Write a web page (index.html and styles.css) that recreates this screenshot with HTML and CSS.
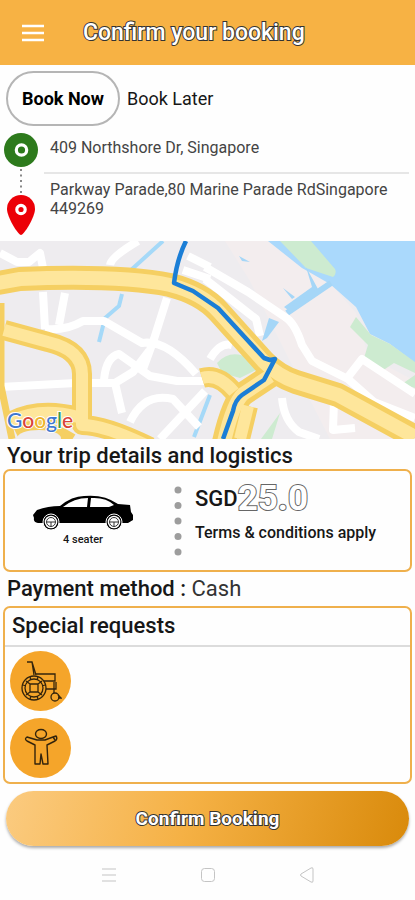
FILE: index.html
```html
<!DOCTYPE html>
<html lang="en">
<head>
<meta charset="utf-8">
<meta name="viewport" content="width=device-width, initial-scale=1">
<title>Confirm your booking</title>
<link rel="stylesheet" href="styles.css">
</head>
<body>
<header class="topbar">
  <button class="menu" type="button" aria-label="Menu">
    <svg width="24" height="18" viewBox="0 0 24 18"><path d="M1 2H23M1 9H23M1 16H23" stroke="#fff" stroke-width="2.400"/></svg>
  </button>
  <h1 class="title">Confirm your booking</h1>
</header>
<main>
  <div class="tabs">
    <button class="tab tab-active" type="button">Book Now</button>
    <button class="tab" type="button">Book Later</button>
  </div>
  <section class="trip" aria-label="Route">
    <svg class="pins" width="42" height="106" viewBox="0 0 42 106">
      <circle cx="21" cy="20" r="17" fill="#2d7a1c"/>
      <circle cx="21.500" cy="20" r="5.200" fill="none" stroke="#fff" stroke-width="3.200"/>
      <path d="M21 39V66" stroke="#888" stroke-width="2" stroke-dasharray="2 3.500"/>
      <path d="M21 105C18 105 7 87 7 79A14 14 0 0 1 35 79C35 87 24 105 21 105Z" fill="#ec0007"/>
      <circle cx="21" cy="79.500" r="4.200" fill="none" stroke="#fff" stroke-width="3.200"/>
    </svg>
    <div class="places">
      <p class="place">409 Northshore Dr, Singapore</p>
      <p class="place">Parkway Parade,80 Marine Parade RdSingapore 449269</p>
    </div>
  </section>
  <div class="map">
    <svg class="map-art" viewBox="0 0 415 198" preserveAspectRatio="xMidYMid slice" role="img" aria-label="Map of the route">
      <rect width="415" height="198" fill="#eeecef"/>
      <path d="M225 0H280L330 42L356 72L368 115L415 140V198H330L290 120L250 40Z" fill="#f3edee"/>
      <path d="M268 0H415V122L390 103L370 93L356 66L330 43L302 27Z" fill="#aad9fc"/>
      <path d="M280 0H311L335 28Q337 33 333 36L306 27Z" fill="#cdebd0"/>
      <path d="M306 26L318 48L288 69L284 66L312 46ZM269 77L279 81L267 97L262 100ZM283 47L295 56L292 58ZM239 15L250 21L242 20Z" fill="#a5d6f7"/>
      <path d="M331 42L287 72" stroke="#a5d6f7" stroke-width="6"/>
      <path d="M356 76L350 86L368 104L364 117L382 130L394 122L415 132V121L390 103L371 94ZM402 143L415 134V147Z" fill="#cdebd0"/>
      <path d="M217 122Q231 107 250 118L258 128L240 137L222 132ZM280 172L272 198H261Z" fill="#cdebd0"/>
      <path d="M163 0L131 29M122 53L119 65L105 77L99 101M210 154L194 196" fill="none" stroke="#a5d9f8" stroke-width="4"/>
      <g fill="none" stroke="#fff" stroke-width="8" stroke-linejoin="round">
        <path d="M0 12L17 21L29 21L40 12L43 27M110 24Q111 16 138 0M188 15L210 26M183 29L210 38" />
        <path d="M43 51L45 88M65 52L59 84M45 88Q66 90 83 80L104 80L142 102Q166 98 196 133M167 57L154 98L143 128M0 146L76 142M88 142H115L133 131L149 110M104 139Q106 116 119 113L150 135L177 140H205M115 142L122 172M130 181Q144 151 173 158L199 186M205 150L160 198"/>
        <path d="M205 26L248 51L285 76Q295 82 302 104L312 120L348 138L374 161L415 177M348 136L362 118L415 153M205 38L256 78L260 95M210 118Q220 101 232 104M282 157Q284 180 299 191L319 198M334 160L333 189L355 187"/>
      </g>
      <g fill="none" stroke-linejoin="round">
        <path d="M1 62V145L12 198" stroke="#f5cf62" stroke-width="7"/>
        <g stroke="#f5cf62">
          <path d="M4 89L48 101Q82 109 82 133V184Q105 184 150 206M12 180Q40 166 78 176M18 196Q42 184 70 202M202 137Q218 132 234 151M248 165L240 198" stroke-width="20"/>
          <path d="M-2 42L20 38Q120 34 170 44Q202 52 219 71L264 121Q278 135 296 141L338 154L415 196M270 135L243 153Q233 162 224 201" stroke-width="24"/>
        </g>
        <g stroke="#fee69b">
          <path d="M4 89L48 101Q82 109 82 133V184Q105 184 150 206M12 180Q40 166 78 176M202 137Q218 132 234 151M248 165L240 198" stroke-width="12"/>
          <path d="M-2 42L20 38Q120 34 170 44Q202 52 219 71L264 121Q278 135 296 141L338 154L415 196M270 135L243 153Q233 162 224 201" stroke-width="14"/>
        </g>
        <ellipse cx="39" cy="197" rx="22" ry="8" fill="#eeecef"/>
        <path d="M186 0Q177 18 174 42L193 50L218 67L264 117L270 119L275 118L264 139L242 154Q235 159 233 170L223 198" stroke="#1b7ed6" stroke-width="4.500"/>
      </g>
    </svg>
    <div class="google"><span class="b">G</span><span class="r">o</span><span class="y">o</span><span class="b">g</span><span class="g">l</span><span class="r">e</span></div>
  </div>
  <h2 class="heading">Your trip details and logistics</h2>
  <section class="card fare">
    <div class="vehicle">
      <svg width="102" height="37" viewBox="0 0 102 37">
        <path d="M2 23L1 20L5 15Q16 11 28 11Q40 1 52 1Q72-1 86 9L98 10L99 17L101 20V25L96 28L6 28Q1 27 2 23Z" fill="#000"/>
        <path d="M31 12Q42 3 56 3L55 12ZM59 3Q74 2 82 10L77 12H58Z" fill="#fff"/>
        <g fill="#000" stroke="#fff" stroke-width="1"><circle cx="19" cy="27" r="8"/><circle cx="82" cy="27" r="8"/></g>
        <g fill="#fff"><circle cx="19" cy="27" r="6.300"/><circle cx="82" cy="27" r="6.300"/></g>
        <g fill="none" stroke="#333" stroke-width="1"><circle cx="19" cy="27" r="4.500"/><circle cx="82" cy="27" r="4.500"/><path d="M15 27H23M19 27V31M78 27H86M82 27V31"/></g>
      </svg>
      <span class="seats">4 seater</span>
    </div>
    <svg class="dots" width="8" height="72" viewBox="0 0 8 72" fill="#9d9d9d"><circle cx="4" cy="5" r="3.500"/><circle cx="4" cy="20.500" r="3.500"/><circle cx="4" cy="36" r="3.500"/><circle cx="4" cy="51.500" r="3.500"/><circle cx="4" cy="67" r="3.500"/></svg>
    <div class="price">
      <p class="amount">SGD<span class="number">25.0</span></p>
      <p class="terms">Terms &amp; conditions apply</p>
    </div>
  </section>
  <h2 class="heading payment">Payment method : <span class="method">Cash</span></h2>
  <section class="card requests">
    <h2 class="requests-title">Special requests</h2>
    <div class="options">
      <button class="option" type="button" aria-label="Wheelchair">
        <svg width="42" height="42" viewBox="0 0 42 42" fill="none" stroke="#33240c" stroke-width="1.300">
          <path d="M7 2H12L14 15M12 2L16 15M16 14H35V21H24M36 22V29H26M34 22V29M34 29V33"/>
          <circle cx="14" cy="28" r="12"/><circle cx="14" cy="28" r="9"/>
          <path d="M10 24H18V32H10ZM10 24L6 21M18 24L22 21M10 32L6 35M18 32L22 35M10 17L11 20M18 17L17 20M3 25L6 26M25 25L22 26M10 39L11 36M18 39L17 36"/>
          <circle cx="35" cy="37" r="4"/><path d="M38 35L41 38L38 38"/>
        </svg>
      </button>
      <button class="option" type="button" aria-label="Child">
        <svg width="42" height="42" viewBox="0 0 42 42" fill="none" stroke="#33240c" stroke-width="1.400" stroke-linejoin="round">
          <ellipse cx="21" cy="7" rx="5.500" ry="4.500"/>
          <path d="M17 13L7 10Q4 12 7 14L15 18V37H20L21 27L23 37H28L27 18L35 14Q38 12 36 9L33 10L25 13ZM33 10L35 13"/>
        </svg>
      </button>
    </div>
  </section>
  <button class="confirm" type="button">Confirm Booking</button>
</main>
<nav class="sysnav" aria-label="System">
  <button type="button" aria-label="Recent"><svg width="16" height="16" viewBox="0 0 16 16"><path d="M1 2H15M1 8H15M1 14H15"/></svg></button>
  <button type="button" aria-label="Home"><svg width="16" height="16" viewBox="0 0 16 16"><rect x="1.500" y="1.500" width="13" height="13" rx="3"/></svg></button>
  <button type="button" aria-label="Back"><svg width="16" height="16" viewBox="0 0 16 16"><path d="M2 7L12 1Q14 0 14 2V14Q14 16 12 15L2 9Q1 8 2 7Z"/></svg></button>
</nav>
</body>
</html>
```
FILE: styles.css
```css
* { box-sizing: border-box; }
body { margin: 0; background: #fefefe; color: #171717; font-family: Roboto, "Liberation Sans", sans-serif; }
h1, h2, p { margin: 0; }
button { margin: 0; padding: 0; border: 0; background: none; color: inherit; font: inherit; }
svg { display: block; }

.topbar { display: flex; align-items: center; gap: 38px; height: 65px; padding: 0 21px; background: #f7b244; }
.title, .confirm { color: #fff; -webkit-text-stroke: 2px #333; paint-order: stroke fill; }
.title { font-size: 23px; line-height: 28px; font-weight: 500; }

.tabs { display: flex; align-items: center; gap: 7px; padding: 6px 6px 0; }
.tab { font-size: 18px; line-height: 24px; }
.tab-active { height: 55px; padding: 0 14px; border: 2px solid #b5b5b5; border-radius: 28px; color: #000; font-weight: 700; }

.trip { display: flex; gap: 2px; padding: 4px 6px 5px 0; }
.pins { flex: none; }
.places { flex: 1; }
.place { padding: 6px 6px; color: #444; font-size: 16px; line-height: 19px; font-weight: 400; }
.place:first-child { padding: 8px 6px 15px; border-bottom: 2px solid #e6e6e6; }

.map { position: relative; }
.map-art { width: 100%; height: 198px; }
.google { position: absolute; left: 7px; bottom: 6px; font: 500 21px/26px Lato, sans-serif; -webkit-text-stroke: 2px #fff; paint-order: stroke fill; }
.b { color: #3f78d0; }
.r { color: #d94338; }
.y { color: #efb52b; }
.g { color: #3b9d55; }

.heading { padding: 3px 7px 0; font-size: 22px; line-height: 27px; font-weight: 500; }
.card { margin: 0 3px; border: 2px solid #efb04c; border-radius: 7px; background: #fefefe; }
.fare { display: flex; align-items: center; height: 103px; padding: 0 27px; }
.vehicle { display: flex; flex-direction: column; align-items: center; gap: 1px; }
.seats { font-size: 11px; line-height: 14px; font-weight: 500; }
.dots { margin-left: 40px; }
.price { margin-left: 13px; padding-bottom: 16px; }
.amount { display: flex; align-items: center; font-size: 22px; line-height: 36px; font-weight: 500; }
.number { color: #fff; font-size: 35px; font-weight: 700; -webkit-text-stroke: 2px #666; paint-order: stroke fill; }
.terms { margin-top: 4px; font-size: 16px; line-height: 24px; font-weight: 500; white-space: nowrap; }
.method { color: #333; font-weight: 400; }
.payment { padding-bottom: 4px; }
.requests-title { padding: 5px 7px 6px; border-bottom: 2px solid #dcdcdc; font-size: 22px; line-height: 26px; font-weight: 500; }
.options { display: flex; flex-direction: column; gap: 7px; padding: 4px 5px; }
.option { display: grid; place-items: center; width: 61px; height: 60px; border-radius: 50%; background: #f5a52a; }
.confirm { display: block; width: calc(100% - 12px); height: 55px; margin: 7px 6px 0; border-radius: 28px; background: linear-gradient(105deg, #fbcb80, #f5b145 45%, #d98a0b); box-shadow: 0 2px 3px #aaa; font-size: 19px; font-weight: 700; }
.sysnav { display: flex; justify-content: center; gap: 83px; padding: 21px 0 8px; }
.sysnav svg { fill: none; stroke: #c4c4c4; stroke-width: 1; }
```
